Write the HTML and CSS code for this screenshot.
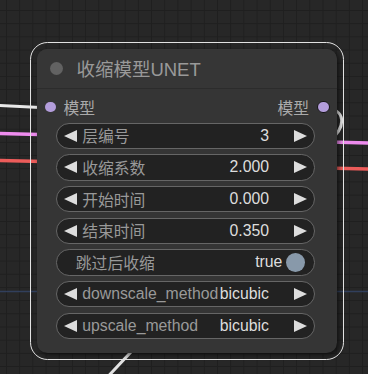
FILE: index.html
```html
<!DOCTYPE html>
<html lang="zh">
<head>
<meta charset="utf-8">
<title>收缩模型UNET</title>
<link rel="stylesheet" href="styles.css">
</head>
<body>
<div class="canvas">
  <svg class="wires" width="368" height="374" viewBox="0 0 368 374">
    <path d="M0 291.5 H368" stroke="#34466a" stroke-width="1.5" opacity="0.8" fill="none"/>
    <path d="M-5 105.2 L50 108" stroke="#e8e8e8" stroke-width="3" fill="none"/>
    <path d="M-5 133.3 L373 143.2" stroke="#ee8cee" stroke-width="3.5" fill="none"/>
    <path d="M-5 160.4 L373 169.2" stroke="#ec5c5a" stroke-width="3.5" fill="none"/>
    <path d="M323 108 C347 108 347 128 328 142 L100 385" stroke="#e2e2e2" stroke-width="3" fill="none"/>
  </svg>
  <div class="node">
    <div class="title">
      <span class="title-dot"></span>
      <span class="title-text">收缩模型UNET</span>
    </div>
    <div class="slots">
      <div class="slot"><span class="dot"></span><span>模型</span></div>
      <div class="slot"><span>模型</span><span class="dot linked"></span></div>
    </div>
    <div class="widgets">
      <div class="widget"><span class="arrow l"></span><span class="label">层编号</span><span class="value">3</span><span class="arrow r"></span></div>
      <div class="widget"><span class="arrow l"></span><span class="label">收缩系数</span><span class="value">2.000</span><span class="arrow r"></span></div>
      <div class="widget"><span class="arrow l"></span><span class="label">开始时间</span><span class="value">0.000</span><span class="arrow r"></span></div>
      <div class="widget"><span class="arrow l"></span><span class="label">结束时间</span><span class="value">0.350</span><span class="arrow r"></span></div>
      <div class="widget toggle"><span class="label">跳过后收缩</span><span class="value">true</span><span class="knob"></span></div>
      <div class="widget"><span class="arrow l"></span><span class="label">downscale_method</span><span class="value">bicubic</span><span class="arrow r"></span></div>
      <div class="widget"><span class="arrow l"></span><span class="label">upscale_method</span><span class="value">bicubic</span><span class="arrow r"></span></div>
    </div>
  </div>
</div>
</body>
</html>
```
FILE: styles.css
```css
* { box-sizing: border-box; }
html, body { margin: 0; padding: 0; }
body {
  width: 368px;
  height: 374px;
  overflow: hidden;
  background: #262626;
  font-family: "Liberation Sans", "Noto Sans CJK SC", sans-serif;
}
.canvas {
  position: relative;
  width: 368px;
  height: 374px;
  overflow: hidden;
  padding: 49px 0 0 37px;
  background-color: #272727;
  background-image:
    linear-gradient(to bottom, #1f1f1f 1px, transparent 1px),
    linear-gradient(to right, #1f1f1f 1px, transparent 1px);
  background-size: 13.2px 13.2px;
  background-position: 6px 10px;
}
.wires {
  position: absolute;
  left: 0;
  top: 0;
  z-index: 0;
}
.node {
  position: relative;
  z-index: 1;
  width: 299.5px;
  background: #353535;
  border-radius: 10.5px;
  outline: 1.5px solid #e2e2e2;
  outline-offset: 6.5px;
  box-shadow: 2px 2px 5px rgba(0, 0, 0, 0.55);
  padding-bottom: 14.5px;
}
.title {
  height: 39.6px;
  display: flex;
  align-items: center;
  padding-left: 12.5px;
  background: #363636;
  border-radius: 10.5px 10.5px 0 0;
  border-bottom: 1px solid #2c2c2c;
}
.title-dot {
  width: 13.2px;
  height: 13.2px;
  border-radius: 50%;
  background: #626262;
  flex: none;
}
.title-text {
  margin-left: 13.7px;
  font-size: 18.5px;
  color: #999;
  white-space: nowrap;
}
.slots {
  display: flex;
  justify-content: space-between;
  align-items: center;
  height: 26.4px;
  margin-top: 5.3px;
  padding: 0 8px;
  font-size: 15.8px;
  color: #aaa;
}
.slot {
  display: flex;
  align-items: center;
  gap: 7.9px;
}
.dot {
  width: 10.6px;
  height: 10.6px;
  border-radius: 50%;
  background: #b39ddb;
  flex: none;
}
.dot.linked {
  width: 12.5px;
  height: 12.5px;
  border: 1.5px solid #151515;
  margin-right: -1px;
}
.widgets {
  display: flex;
  flex-direction: column;
  gap: 5.28px;
  margin-top: 2.3px;
  padding: 0 21.3px 0 19.3px;
}
.widget {
  height: 26.4px;
  display: flex;
  align-items: center;
  background: #222;
  border: 1px solid #666;
  border-radius: 13.2px;
  font-size: 15.8px;
  white-space: nowrap;
  padding: 0 6.9px;
}
.arrow {
  width: 0;
  height: 0;
  flex: none;
  border-top: 6.6px solid transparent;
  border-bottom: 6.6px solid transparent;
}
.arrow.l { border-right: 13.2px solid #ddd; }
.arrow.r { border-left: 13.2px solid #ddd; }
.label {
  color: #999;
  margin-left: 5px;
  flex: none;
}
.value {
  color: #ddd;
  margin-left: auto;
  margin-right: 25.3px;
  flex: none;
}
.toggle {
  padding: 0 9.3px 0 18.5px;
}
.toggle .label { margin-left: 0; }
.toggle .value { margin-right: 3.7px; }
.knob {
  width: 18.8px;
  height: 18.8px;
  border-radius: 50%;
  background: #8899aa;
  flex: none;
}
```
